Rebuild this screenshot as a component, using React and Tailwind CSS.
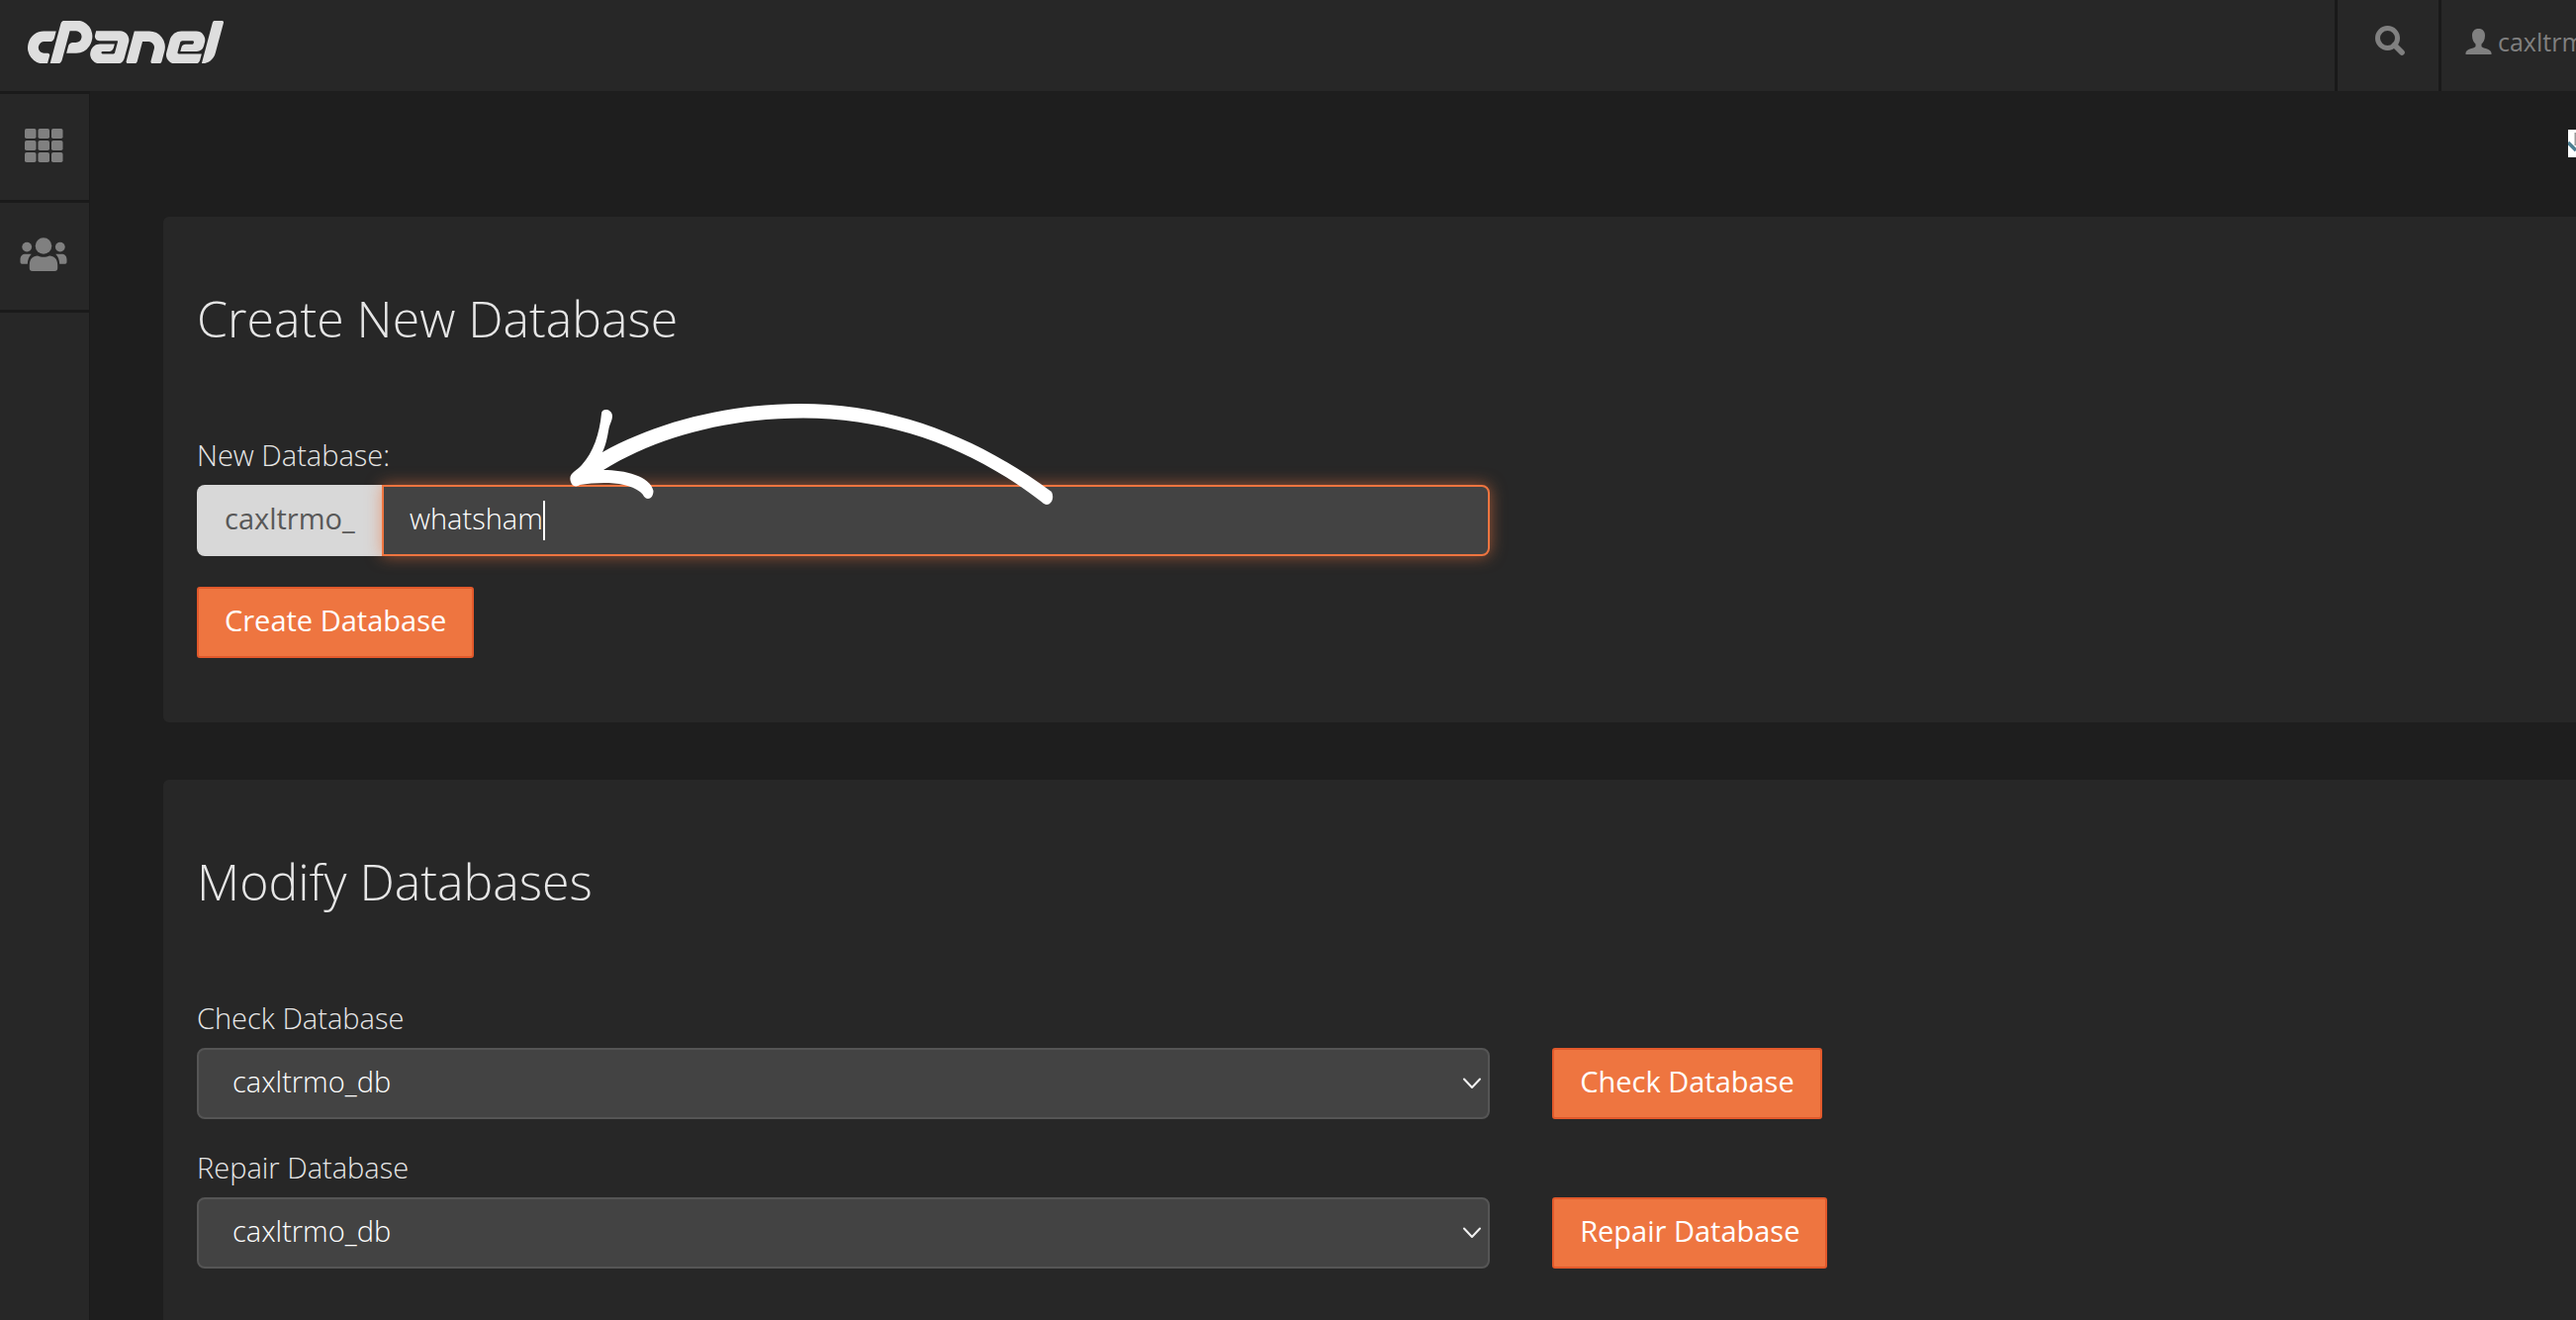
import React from "react";
import { SiCpanel } from "react-icons/si";

function GridIcon() {
  return (
    <svg className="h-[34px] w-[39px]" viewBox="0 0 39 34" fill="currentColor" aria-hidden="true">
      {[0, 12, 24].map((y) =>
        [0, 13.5, 27].map((x) => <rect key={x + "-" + y} x={x} y={y} width="11.5" height="10" rx="1.8" />)
      )}
    </svg>
  );
}

function UsersIcon() {
  return (
    <svg className="h-[34px] w-12" viewBox="0 0 48 34" fill="currentColor" aria-hidden="true">
      <circle cx="24" cy="8.5" r="8.3" />
      <circle cx="7.2" cy="9.6" r="4.9" />
      <circle cx="40.8" cy="9.6" r="4.9" />
      <path d="M9.8 31V28C9.8 22 13 18.6 18 18.6C21.5 20.3 26.5 20.3 30 18.6C35 18.6 38.2 22 38.2 28V31Q38.2 34 35.2 34H12.8Q9.8 34 9.8 31Z" />
      <path d="M0.5 25V22.5C0.5 18.8 2.5 16.8 6 16.8H11.8C9.3 19.3 8 22.5 7.8 26.7H2.2Q0.5 26.7 0.5 25Z" />
      <path d="M47.5 25V22.5C47.5 18.8 45.5 16.8 42 16.8H36.2C38.7 19.3 40 22.5 40.2 26.7H45.8Q47.5 26.7 47.5 25Z" />
    </svg>
  );
}

function SearchIcon() {
  return (
    <svg className="h-[30px] w-[30px]" viewBox="0 0 30 30" fill="none" stroke="currentColor" aria-hidden="true">
      <circle cx="12.5" cy="12.5" r="10" strokeWidth="5" />
      <path d="M19.5 19.5L27 27" strokeWidth="5.6" strokeLinecap="round" />
    </svg>
  );
}

function UserIcon() {
  return (
    <svg className="h-[26px] w-[27px] shrink-0" viewBox="0 0 27 26" fill="currentColor" aria-hidden="true">
      <path d="M13.5 0C17.7 0 20 2.7 20 7C20 11.5 18 14 16.5 15.5V18C17 19.6 26.5 20.5 26.5 24.5V26H0.5V24.5C0.5 20.5 10 19.6 10.5 18V15.5C9 14 7 11.5 7 7C7 2.7 9.3 0 13.5 0Z" />
    </svg>
  );
}

function PanelButton({ children }) {
  return (
    <button
      type="button"
      className="h-[72px] justify-self-start rounded-[3px] border-2 border-[#e2592b] bg-[#ee7540] px-[26px] pb-1 text-[29px] font-medium text-white"
    >
      {children}
    </button>
  );
}

function DatabaseRow({ id, label }) {
  return (
    <form className="grid grid-cols-[24fr_19fr] gap-x-[63px]">
      <label htmlFor={id} className="col-span-2 h-[52px] text-[29px] leading-[44px] font-light">
        {label}
      </label>
      <div className="relative">
        <select
          id={id}
          className="h-[72px] w-full appearance-none rounded-lg border-2 border-[#555555] bg-[#434343] pb-1 pl-[34px] text-[29px] font-light text-white"
        >
          <option>caxltrmo_db</option>
        </select>
        <svg
          className="pointer-events-none absolute top-[30px] right-2 h-3 w-5"
          viewBox="0 0 20 12"
          fill="none"
          stroke="#f2f2f2"
          strokeWidth="2"
          strokeLinecap="round"
          strokeLinejoin="round"
          aria-hidden="true"
        >
          <path d="M2 1.5L10 10L18 1.5" />
        </svg>
      </div>
      <PanelButton>{label}</PanelButton>
    </form>
  );
}

function HandArrow() {
  return (
    <svg
      className="pointer-events-none absolute -top-[84px] left-[375px] h-[106px] w-[492px]"
      viewBox="574 406 492 106"
      fill="#ffffff"
      aria-hidden="true"
    >
      <path d="M608 418C608 412.5 618 412.5 619 420C619 425 616.5 428 615.5 433C614 442 612 451 609 457C663 427 735 408 809 408C905 408 990 443 1063 497C1066 503 1063 510 1058 510C1056 510 1054 508 1050 505C980 452 900 422.5 812 422.5C735 422.5 664 442 610 475C632 475 657 481 660.5 496C660.5 501 658 504 655 504C651 504 651 500 647 497C633 486 605 487 586 490C582 493 578 491 577 487C574 478 582 477 588 470C600 457 606 438 608 418Z" />
    </svg>
  );
}

export default function App() {
  return (
    <div className="flex h-screen flex-col overflow-hidden bg-[#1e1e1e] font-['Open_Sans',sans-serif] text-[#e6e6e6]">
      <header className="flex h-[92px] shrink-0 items-stretch bg-[#272727]">
        <a href="#home" aria-label="cPanel" className="flex items-start pt-[21px] pl-7 text-[#dedede]">
          <SiCpanel viewBox="0 9.4 24 5.2" className="h-[43px] w-[198px]" />
        </a>
        <button
          type="button"
          aria-label="Search"
          className="ml-auto flex w-[105px] justify-center border-l-3 border-[#191919] pt-[26px] pl-1 text-[#808080]"
        >
          <SearchIcon />
        </button>
        <div className="w-[139px] overflow-hidden border-l-3 border-[#191919]">
          <a href="#account" className="flex w-max items-center gap-1.5 pt-6 pl-6 text-[25px] leading-9 text-[#808080]">
            <UserIcon />
            caxltrmo
          </a>
        </div>
      </header>

      <div className="flex min-h-0 flex-1">
        <nav className="w-[91px] shrink-0 border-t-3 border-r border-[#1a1a1a] bg-[#272727] text-[#808080]">
          <a href="#tools" aria-label="Tools" className="flex h-[110px] items-center justify-center border-b-3 border-[#1a1a1a] pr-0.5 pb-1">
            <GridIcon />
          </a>
          <a href="#users" aria-label="User manager" className="flex h-[111px] items-center justify-center border-b-3 border-[#1a1a1a] pr-0.5 pb-1">
            <UsersIcon />
          </a>
        </nav>

        <main className="min-w-0 flex-1 pl-[74px]">
          <div className="flex h-[127px] justify-end pt-[39px]">
            <svg className="h-7 w-2" viewBox="0 0 8 28" aria-hidden="true">
              <rect width="8" height="28" fill="#ffffff" />
              <path d="M6.5 3H8V16H6.500Z" fill="#9a9a9a" />
              <path d="M0 13L8 21" stroke="#4d7f92" strokeWidth="3.5" />
            </svg>
          </div>

          <section className="h-[511px] rounded-l-md bg-[#272727] pt-[68px] pl-[34px]">
            <h2 className="h-[139px] text-[50px] leading-[70px] font-light">Create New Database</h2>
            <form>
              <div className="grid grid-cols-[24fr_19fr] gap-x-[63px]">
                <label htmlFor="new-db" className="col-span-2 h-[64px] pt-3 text-[29px] leading-[44px] font-light">
                  New Database:
                </label>
                <div className="relative flex h-[72px]">
                  <span className="flex w-[187px] items-center rounded-l-lg bg-[#d8d8d8] pb-1 pl-7 text-[29px] text-[#585858]">
                    caxltrmo_
                  </span>
                  <input
                    id="new-db"
                    type="text"
                    defaultValue="whatsham"
                    className="min-w-0 flex-1 rounded-r-lg border-2 border-[#ee7540] bg-[#434343] pb-1 pl-[26px] text-[29px] font-light text-white shadow-[0_0_16px_rgba(238,117,64,0.6)] outline-none"
                  />
                  <span className="absolute top-4 left-[350px] h-10 w-0.5 bg-white" />
                  <HandArrow />
                </div>
              </div>
              <div className="grid pt-[31px]">
                <PanelButton>Create Database</PanelButton>
              </div>
            </form>
          </section>

          <section className="mt-[58px] h-[600px] rounded-l-md bg-[#272727] pt-[68px] pl-[34px]">
            <h2 className="h-[151px] text-[50px] leading-[70px] font-light">Modify Databases</h2>
            <div className="flex flex-col gap-[27px]">
              <DatabaseRow id="check-db" label="Check Database" />
              <DatabaseRow id="repair-db" label="Repair Database" />
            </div>
          </section>
        </main>
      </div>
    </div>
  );
}
